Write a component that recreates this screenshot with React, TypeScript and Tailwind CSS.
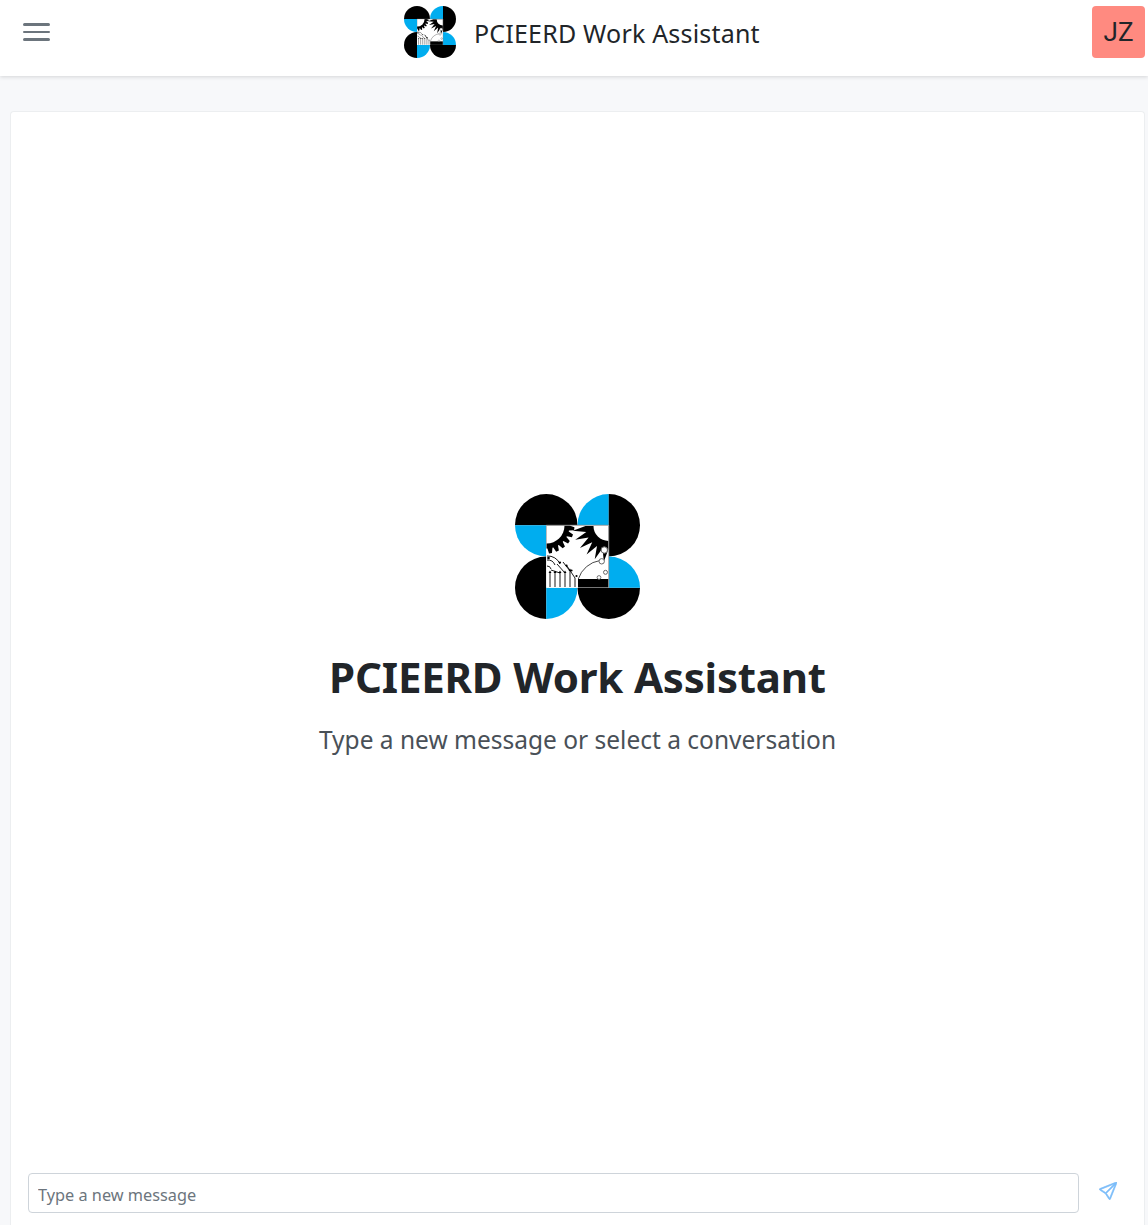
import { BsSend } from "react-icons/bs";

// toothed ring around a corner of the centre tile, from angle a0 to a1 (degrees)
function toothed(cx: number, cy: number, a0: number, a1: number, teeth: number, root: number, tip: number, square: boolean) {
  const pts: string[] = [];
  const at = (deg: number, r: number) => {
    const t = (deg * Math.PI) / 180;
    return `${(cx + r * Math.cos(t)).toFixed(2)} ${(cy + r * Math.sin(t)).toFixed(2)}`;
  };
  const step = (a1 - a0) / teeth;
  for (let i = 0; i < teeth; i++) {
    const a = a0 + step * i;
    pts.push(at(a, root));
    if (square) {
      pts.push(at(a + step * 0.25, tip), at(a + step * 0.65, tip), at(a + step * 0.85, root));
    } else {
      pts.push(at(a + step * 0.5, tip));
    }
  }
  pts.push(at(a1, root));
  return `M${cx} ${cy}L${pts.join("L")}z`;
}

function Logo({ className }: { className: string }) {
  return (
    <svg viewBox="0 0 125 125" className={className}>
      {/* four quartered discs */}
      <path d="M0 31.25a31.25 31.25 0 0 1 62.5 0z" fill="#000" />
      <path d="M0 31.25h31.25v31.25A31.25 31.25 0 0 1 0 31.25z" fill="#00adef" />
      <path d="M62.5 31.25A31.25 31.25 0 0 1 93.75 0v31.25z" fill="#00adef" />
      <path d="M93.75 0a31.25 31.25 0 0 1 0 62.5z" fill="#000" />
      <path d="M31.25 125a31.25 31.25 0 0 1 0-62.5z" fill="#000" />
      <path d="M31.25 93.75h31.25A31.25 31.25 0 0 1 31.25 125z" fill="#00adef" />
      <path d="M62.5 93.75a31.25 31.25 0 0 0 62.5 0z" fill="#000" />
      <path d="M93.75 62.5A31.25 31.25 0 0 1 125 93.75H93.75z" fill="#00adef" />

      {/* centre tile */}
      <rect x="31.25" y="31.25" width="62.5" height="62.5" fill="#fff" />

      {/* gear */}
      <path d={toothed(31.5, 31.5, 0, 90, 6, 23, 28, true)} fill="#000" />
      <path d="M31.5 31.5h18a18 18 0 0 1-18 18z" fill="#fff" />

      {/* spiked sun */}
      <path d={toothed(93.5, 32, 90, 180, 6, 23, 36, false)} fill="#000" />
      <path d="M93.5 32v15a15 15 0 0 1-15-15z" fill="#fff" />

      {/* circuit traces */}
      <g fill="none" stroke="#000" strokeWidth="0.9">
        <path d="M32 66a8 8 0 0 1 8 5M32 62a13 13 0 0 1 13 8M32 72a4 4 0 0 1 4 3" />
        <path d="M35 79v14M40 79v14M45 79v14M50 79v14M55 77v16M60 84v9" />
        <path d="M36 76l9 3M42 70l8 9M48 68l7 9M52 72l8 12" />
      </g>
      <g fill="#000">
        <circle cx="33.5" cy="64" r="1.3" />
        <circle cx="45" cy="68.5" r="1.1" />
        <circle cx="51.5" cy="71.5" r="1.1" />
        <circle cx="56.5" cy="76.5" r="1.1" />
        <circle cx="61.5" cy="82" r="1.1" />
        <path d="M33.5 79h3l-1.5-2.5zM38.5 79h3l-1.5-2.5zM43.5 79h3l-1.5-2.5zM48.5 79h3l-1.5-2.5zM53.5 77h3l-1.5-2.5z" />
      </g>

      {/* flask with bubbles */}
      <path d="M63.3 85a27 27 0 0 1 21.7-18.5" fill="none" stroke="#333" strokeWidth="0.9" />
      <rect x="63" y="85" width="30.5" height="8.5" fill="#000" />
      <circle cx="84" cy="83.5" r="1.9" fill="#fff" stroke="#444" strokeWidth="0.7" />
      <g fill="#fff" stroke="#666" strokeWidth="1">
        <circle cx="89.3" cy="56" r="3.2" />
        <circle cx="86.7" cy="67.3" r="2.7" />
        <circle cx="90.5" cy="78.3" r="2" />
      </g>
      <path d="M31.25 31.25h62.5v62.5" fill="none" stroke="#888" strokeWidth="0.8" />
    </svg>
  );
}

export default function App() {
  return (
    <div className="h-screen flex flex-col overflow-hidden bg-[#f7f8fa] font-['Noto_Sans',sans-serif] text-[#212529]">
      <header className="h-[76px] shrink-0 flex items-start pt-[6px] bg-white shadow-[0_1px_4px_rgba(0,0,0,0.14)] z-10">
        <button className="ml-[23px] mt-[17px] w-[27px] flex flex-col gap-[5px]">
          <span className="h-[2.5px] bg-[#6c757d] rounded-full" />
          <span className="h-[2.5px] bg-[#6c757d] rounded-full" />
          <span className="h-[2.5px] bg-[#6c757d] rounded-full" />
        </button>
        <div className="ml-[354px] flex items-center gap-[18px]">
          <Logo className="w-[52px] h-[52px]" />
          <span className="text-[25px] leading-none tracking-[0.2px] mt-[2px]">PCIEERD Work Assistant</span>
        </div>
        <div className="ml-auto mr-[3px] w-[53px] h-[52px] rounded-[4px] bg-[#ff8a80] flex items-center justify-center font-['Roboto',sans-serif] text-[26px] pt-[1px]">
          JZ
        </div>
      </header>

      <main className="flex-1 min-h-0 flex pt-[35px] pl-[10px] pr-[3px]">
        <div className="flex-1 flex flex-col bg-white border border-b-0 border-[#eceef0] rounded-t-[4px]">
          <div className="flex-1 flex flex-col items-center justify-center pb-[33px]">
            <Logo className="w-[125px] h-[125px]" />
            <h1 className="mt-[34px] text-[42px] leading-[48px] font-bold tracking-[-0.2px]">PCIEERD Work Assistant</h1>
            <p className="mt-[20px] text-[24.5px] leading-[38px] text-[#495057]">Type a new message or select a conversation</p>
          </div>
          <div className="flex items-center pl-[17px] pb-[12px]">
            <input
              placeholder="Type a new message"
              className="w-[1051px] h-[40px] px-[9px] pt-[3px] border border-[#ced4da] rounded-[4px] text-[16.3px] placeholder:text-[#6c757d] outline-none"
            />
            <button className="ml-[20px] mb-[4px] text-[#7bbcf9]">
              <BsSend size={18} className="stroke-[0.6px]" />
            </button>
          </div>
        </div>
      </main>
    </div>
  );
}
